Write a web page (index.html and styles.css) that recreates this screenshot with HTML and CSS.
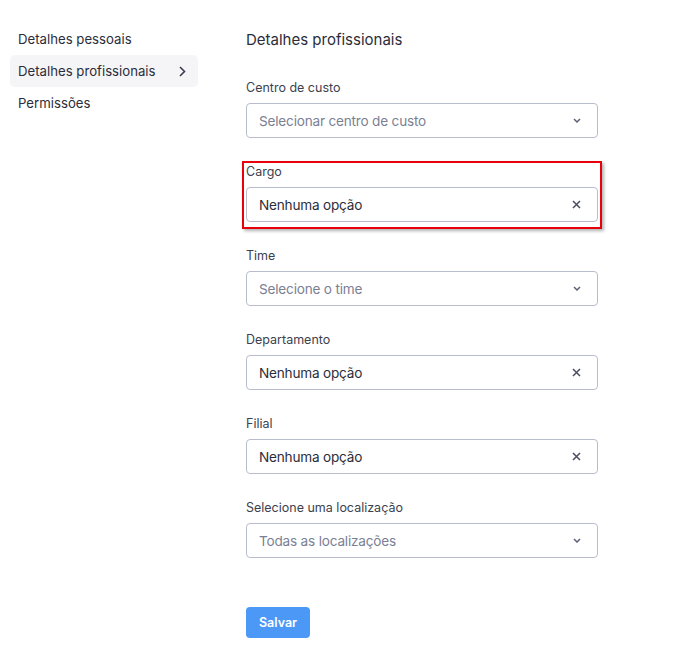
FILE: index.html
```html
<!DOCTYPE html>
<html lang="pt">
<head>
<meta charset="utf-8">
<link rel="stylesheet" href="styles.css">
</head>
<body>
<div class="page">
  <nav class="sidebar">
    <a class="nav-item">Detalhes pessoais</a>
    <a class="nav-item active">Detalhes profissionais
      <svg class="nav-chev" width="7" height="11" viewBox="0 0 7 11"><path d="M1 1l4.5 4.5L1 10" fill="none" stroke="#3b3e4d" stroke-width="1.6"/></svg>
    </a>
    <a class="nav-item">Permissões</a>
  </nav>
  <main class="main">
    <h2 class="title">Detalhes profissionais</h2>
    <form class="form">
      <div class="field">
        <label class="label">Centro de custo</label>
        <div class="select"><span class="placeholder">Selecionar centro de custo</span>
          <svg class="icon" width="8" height="5" viewBox="0 0 8 5"><path d="M1 1l3 3 3-3" fill="none" stroke="#5d6178" stroke-width="1.5"/></svg>
        </div>
      </div>
      <div class="field highlighted">
        <label class="label">Cargo</label>
        <div class="select"><span class="value">Nenhuma opção</span>
          <svg class="icon" width="9" height="9" viewBox="0 0 9 9"><path d="M1 1l7 7M8 1L1 8" fill="none" stroke="#4a4d60" stroke-width="1.5"/></svg>
        </div>
        <span class="annot"></span>
      </div>
      <div class="field">
        <label class="label">Time</label>
        <div class="select"><span class="placeholder">Selecione o time</span>
          <svg class="icon" width="8" height="5" viewBox="0 0 8 5"><path d="M1 1l3 3 3-3" fill="none" stroke="#5d6178" stroke-width="1.5"/></svg>
        </div>
      </div>
      <div class="field">
        <label class="label">Departamento</label>
        <div class="select"><span class="value">Nenhuma opção</span>
          <svg class="icon" width="9" height="9" viewBox="0 0 9 9"><path d="M1 1l7 7M8 1L1 8" fill="none" stroke="#4a4d60" stroke-width="1.5"/></svg>
        </div>
      </div>
      <div class="field">
        <label class="label">Filial</label>
        <div class="select"><span class="value">Nenhuma opção</span>
          <svg class="icon" width="9" height="9" viewBox="0 0 9 9"><path d="M1 1l7 7M8 1L1 8" fill="none" stroke="#4a4d60" stroke-width="1.5"/></svg>
        </div>
      </div>
      <div class="field">
        <label class="label">Selecione uma localização</label>
        <div class="select"><span class="placeholder">Todas as localizações</span>
          <svg class="icon" width="8" height="5" viewBox="0 0 8 5"><path d="M1 1l3 3 3-3" fill="none" stroke="#5d6178" stroke-width="1.5"/></svg>
        </div>
      </div>
      <div class="actions">
        <button type="button" class="btn">Salvar</button>
      </div>
    </form>
  </main>
</div>
</body>
</html>
```

FILE: styles.css
```css
* { box-sizing: border-box; }
html, body { margin: 0; background: #fff; }
body {
  font-family: Inter, "Noto Sans", "Liberation Sans", sans-serif;
  color: #2b2d3a;
}
.page {
  display: grid;
  grid-template-columns: 188px 1fr;
  column-gap: 48px;
  padding: 23px 0 0 10px;
}
.sidebar {
  display: flex;
  flex-direction: column;
}
.nav-item {
  display: flex;
  align-items: center;
  justify-content: space-between;
  height: 32px;
  padding: 0 12px 0 8px;
  font-size: 13.2px;
  color: #2b2d3a;
  border-radius: 5px;
}
.nav-item.active { background: #f5f5f7; }
.nav-chev { display: block; }
.main {
  padding-top: 7px;
  width: 352px;
}
.title {
  margin: 0;
  font-size: 15px;
  font-weight: 400;
  line-height: 20px;
  color: #2b2d3a;
}
.form {
  display: flex;
  flex-direction: column;
  gap: 26px;
  margin-top: 30px;
}
.field {
  position: relative;
  display: flex;
  flex-direction: column;
  gap: 7px;
}
.label {
  font-size: 12.5px;
  line-height: 16px;
  color: #3c3f4e;
}
.select {
  display: flex;
  align-items: center;
  justify-content: space-between;
  height: 35px;
  padding: 0 16px 0 12px;
  border: 1px solid #b9bccb;
  border-radius: 4px;
  font-size: 13.6px;
  letter-spacing: -0.2px;
}
.placeholder { color: #7b7f94; }
.value { color: #2b2d3a; }
.icon { display: block; }
.annot {
  position: absolute;
  left: -4px;
  top: -3px;
  right: -4px;
  bottom: -7px;
  border: 2px solid #e8000b;
  box-shadow: 2px 2px 3px rgba(0,0,0,0.3);
  pointer-events: none;
}
.actions { padding-top: 23px; }
.btn {
  height: 31px;
  width: 64px;
  border: none;
  border-radius: 4px;
  background: #4b98f6;
  color: #fff;
  font-family: inherit;
  font-size: 12.5px;
  font-weight: 600;
  padding: 0;
}
```
